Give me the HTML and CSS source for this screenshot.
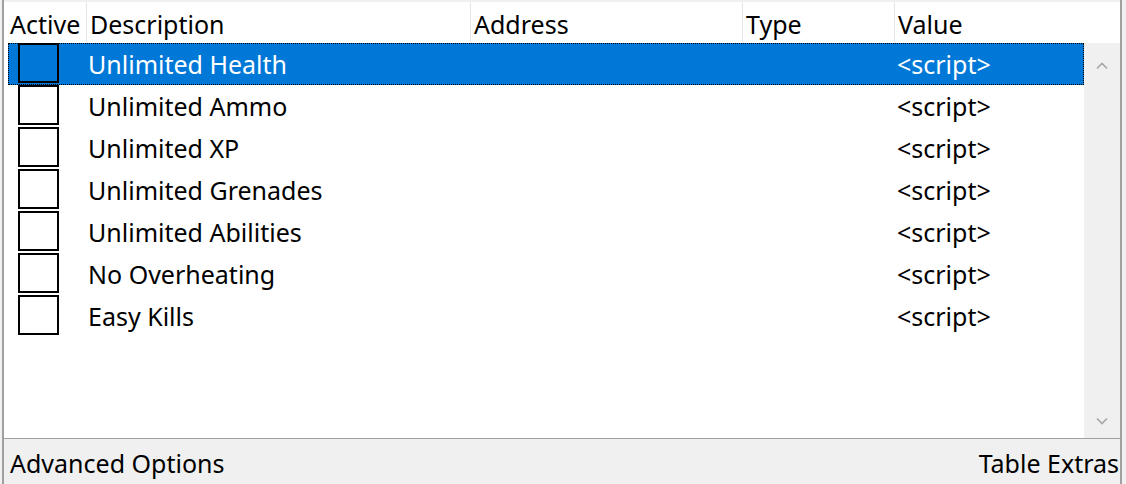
FILE: index.html
```html
<!DOCTYPE html>
<html lang="en">
<head>
    <meta charset="UTF-8">
    <title>Cheat Table</title>
    <link rel="stylesheet" href="styles.css">
</head>
<body>
    <div class="panel">
        <div class="cheat-list">
            <div class="list-head">
                <div class="head-cell first">Active</div>
                <div class="head-cell">Description</div>
                <div class="head-cell">Address</div>
                <div class="head-cell">Type</div>
                <div class="head-cell">Value</div>
            </div>
            <div class="list-body">
                <div class="rows">
                    <div class="row selected">
                        <div class="check-cell"><span class="checkbox"></span></div>
                        <div class="desc">Unlimited Health</div>
                        <div class="value">&lt;script&gt;</div>
                    </div>
                    <div class="row">
                        <div class="check-cell"><span class="checkbox"></span></div>
                        <div class="desc">Unlimited Ammo</div>
                        <div class="value">&lt;script&gt;</div>
                    </div>
                    <div class="row">
                        <div class="check-cell"><span class="checkbox"></span></div>
                        <div class="desc">Unlimited XP</div>
                        <div class="value">&lt;script&gt;</div>
                    </div>
                    <div class="row">
                        <div class="check-cell"><span class="checkbox"></span></div>
                        <div class="desc">Unlimited Grenades</div>
                        <div class="value">&lt;script&gt;</div>
                    </div>
                    <div class="row">
                        <div class="check-cell"><span class="checkbox"></span></div>
                        <div class="desc">Unlimited Abilities</div>
                        <div class="value">&lt;script&gt;</div>
                    </div>
                    <div class="row">
                        <div class="check-cell"><span class="checkbox"></span></div>
                        <div class="desc">No Overheating</div>
                        <div class="value">&lt;script&gt;</div>
                    </div>
                    <div class="row">
                        <div class="check-cell"><span class="checkbox"></span></div>
                        <div class="desc">Easy Kills</div>
                        <div class="value">&lt;script&gt;</div>
                    </div>
                </div>
                <div class="scrollbar">
                    <svg width="12" height="8" viewBox="0 0 12 8"><path d="M1 6.5 L6 1.5 L11 6.5" fill="none" stroke="#a6a6a6" stroke-width="1.6"/></svg>
                    <svg width="12" height="8" viewBox="0 0 12 8"><path d="M1 1.5 L6 6.5 L11 1.5" fill="none" stroke="#a6a6a6" stroke-width="1.6"/></svg>
                </div>
            </div>
        </div>
        <div class="footer">
            <span>Advanced Options</span>
            <span>Table Extras</span>
        </div>
    </div>
</body>
</html>
```

FILE: styles.css
```css
* {
    margin: 0;
    padding: 0;
    box-sizing: border-box;
}

body {
    background-color: #f0f0f0;
    font-family: 'Noto Sans', 'Open Sans', sans-serif;
    font-size: 25px;
    color: #000;
    width: 1126px;
    height: 484px;
    overflow: hidden;
}

.panel {
    margin-left: 2px;
    width: 1120px;
    height: 484px;
    border-left: 2px solid #a0a0a0;
    border-right: 2px solid #a0a0a0;
    display: flex;
    flex-direction: column;
}

.cheat-list {
    margin-top: 2px;
    background-color: white;
    display: flex;
    flex-direction: column;
    height: 436px;
}

.list-head {
    display: grid;
    grid-template-columns: 82px 384px 272px 152px 1fr;
    height: 41px;
}

.head-cell {
    border-left: 1px solid #e5e5e5;
    padding: 3px 0 0 3px;
    line-height: 38px;
    white-space: nowrap;
    overflow: hidden;
}

.head-cell.first {
    border-left: none;
    padding-left: 6px;
}

.list-body {
    flex: 1;
    display: flex;
}

.rows {
    flex: 1;
    padding-left: 4px;
}

.row {
    display: grid;
    grid-template-columns: 80px 809px 1fr;
    height: 42px;
    align-items: center;
}

.row.selected {
    background-color: #0078d7;
    color: white;
    outline: 1px dotted #000;
    outline-offset: -1px;
}

.check-cell {
    height: 42px;
    padding-left: 10px;
}

.checkbox {
    display: block;
    width: 41px;
    height: 40px;
    border: 2px solid #000;
}

.scrollbar {
    width: 36px;
    background-color: #f0f0f0;
    display: flex;
    flex-direction: column;
    justify-content: space-between;
    align-items: center;
    padding: 19px 0 13px;
}

.footer {
    flex: 1;
    border-top: 1px solid #a0a0a0;
    display: flex;
    justify-content: space-between;
    align-items: center;
    padding: 2px 1px 0 6px;
}
```
